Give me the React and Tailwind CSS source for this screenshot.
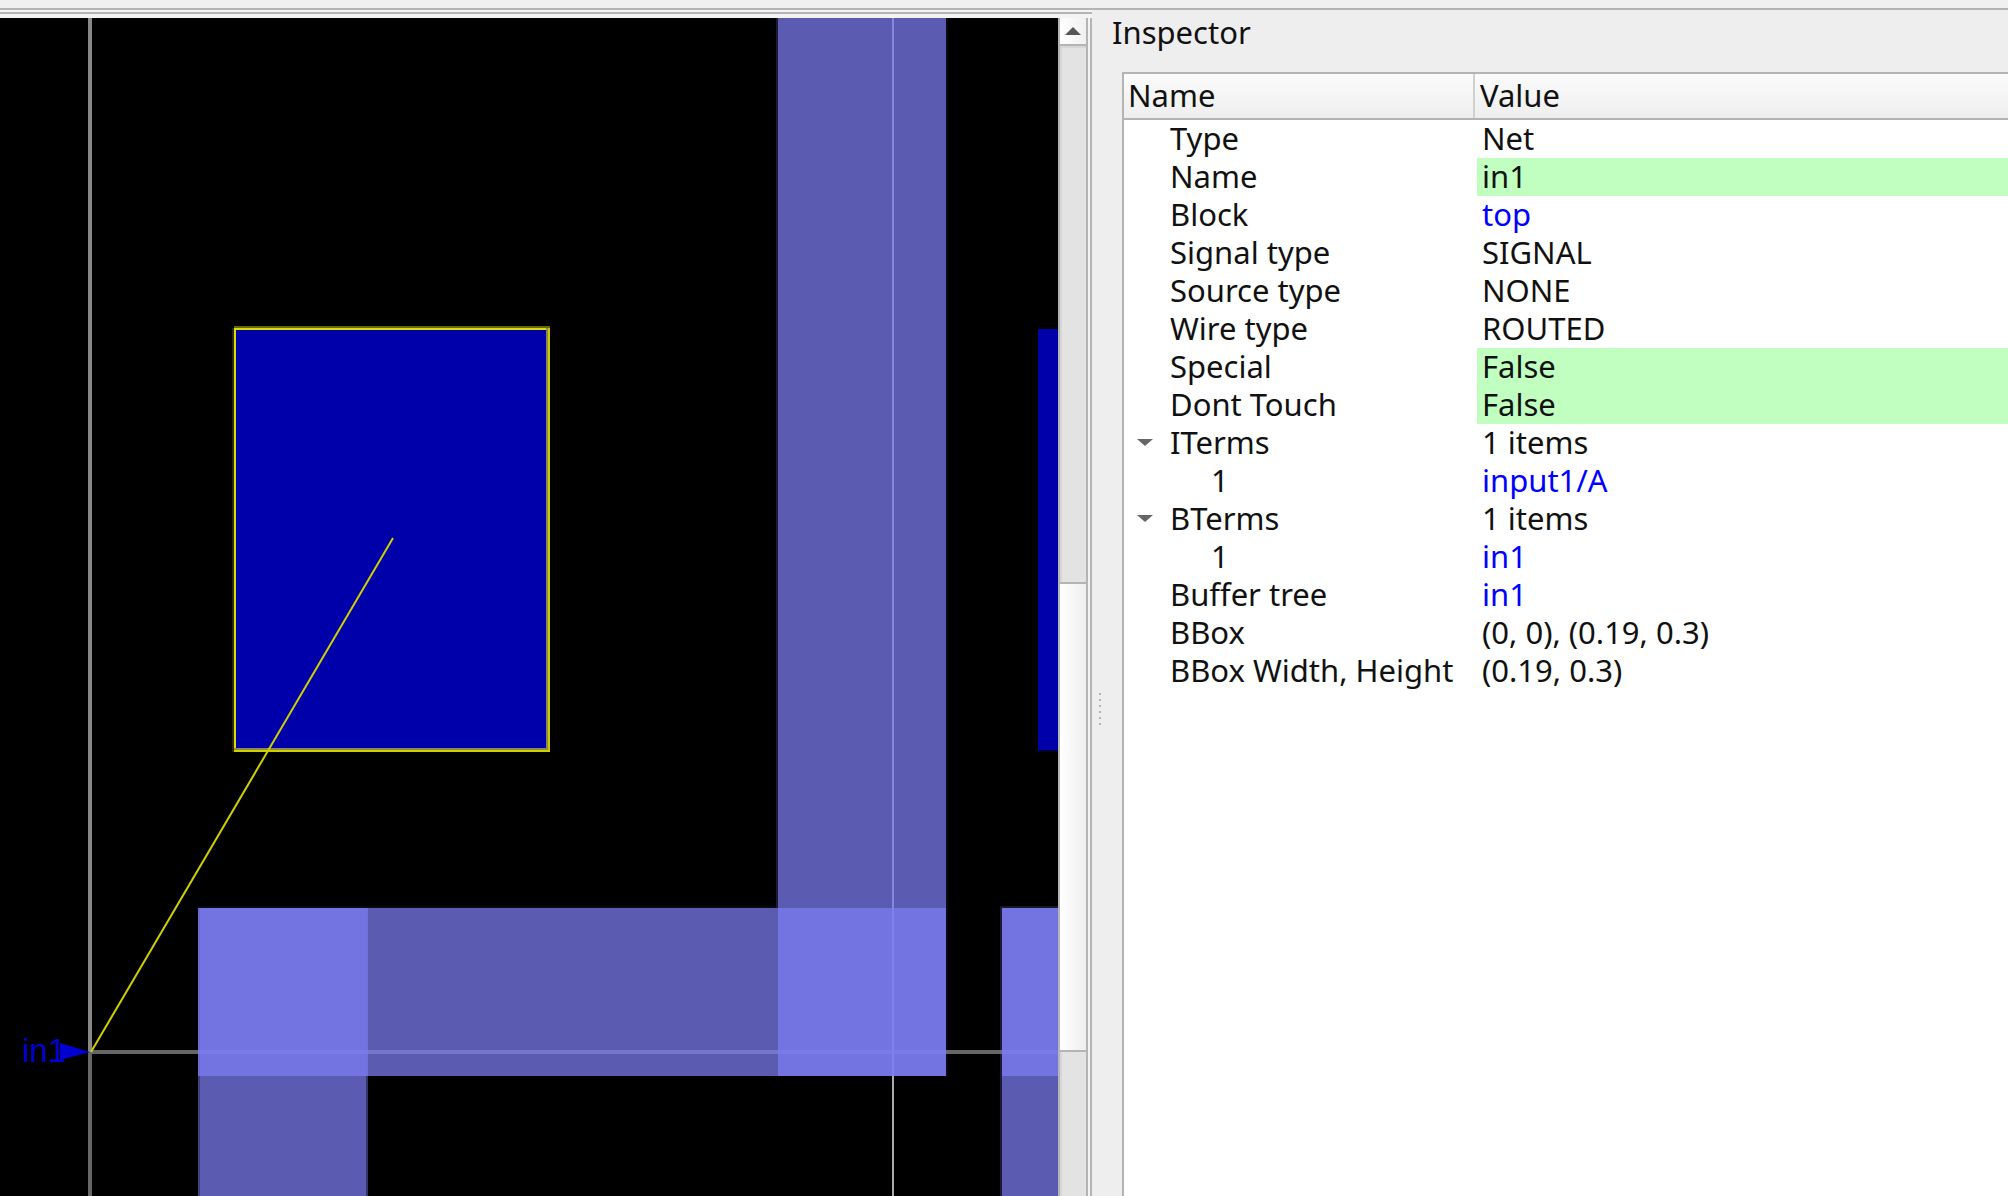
import React from 'react'

const rows = [
  { name: 'Type', value: 'Net' },
  { name: 'Name', value: 'in1', edit: true },
  { name: 'Block', value: 'top', link: true },
  { name: 'Signal type', value: 'SIGNAL' },
  { name: 'Source type', value: 'NONE' },
  { name: 'Wire type', value: 'ROUTED' },
  { name: 'Special', value: 'False', edit: true },
  { name: 'Dont Touch', value: 'False', edit: true },
  { name: 'ITerms', value: '1 items', open: true },
  { name: '1', value: 'input1/A', link: true, child: true },
  { name: 'BTerms', value: '1 items', open: true },
  { name: '1', value: 'in1', link: true, child: true },
  { name: 'Buffer tree', value: 'in1', link: true },
  { name: 'BBox', value: '(0, 0), (0.19, 0.3)' },
  { name: 'BBox Width, Height', value: '(0.19, 0.3)' },
]

const METAL = '#7c7cf3'
const METAL_ALPHA = 0.735

// each metal shape: [x, y, w, h]
const metalShapes = [
  [778, 18, 168, 1058],
  [200, 908, 166, 288],
  [1002, 908, 56, 288],
  [198, 908, 748, 168],
  [1002, 908, 56, 168],
]

// soft edges the scaled up screenshot has beside the metal
const metalFringes = [
  [776, 18, 2, 890, 0.3],
  [946, 18, 2, 1058, 0.12],
  [198, 908, 2, 288, 0.7],
  [366, 908, 2, 168, 0.95],
  [366, 1076, 2, 120, 0.6],
  [1000, 908, 2, 288, 0.3],
  [198, 906, 578, 2, 0.1],
  [1000, 906, 58, 2, 0.25],
]

const LayoutCanvas = () => (
  <svg width="1058" height="1178" viewBox="0 18 1058 1178" className="block shrink-0 bg-black">
    <g shapeRendering="crispEdges">
      {/* rulers sit under the metal */}
      <rect x="88" y="18" width="4" height="1034" fill="#888888" />
      <rect x="88" y="1052" width="4" height="144" fill="#666666" />
      <rect x="92" y="1050" width="966" height="4" fill="#666666" />
      <rect x="892" y="18" width="2" height="1178" fill="#aaaaaa" />

      {metalFringes.map(([x, y, w, h, a], i) => (
        <rect key={i} x={x} y={y} width={w} height={h} fill={METAL} fillOpacity={a * METAL_ALPHA} />
      ))}
      {metalShapes.map(([x, y, w, h], i) => (
        <rect key={i} x={x} y={y} width={w} height={h} fill={METAL} fillOpacity={METAL_ALPHA} />
      ))}

      {/* cell and its neighbour */}
      <rect x="1038" y="329" width="20" height="421" fill="#0000aa" />
      <rect x="1038" y="750" width="20" height="2" fill="#000030" />
      <rect x="232" y="328" width="2" height="424" fill="#2a2a00" />
      <rect x="234" y="326" width="316" height="2" fill="#666600" />
      <rect x="234" y="328" width="314" height="2" fill="#dcdc00" />
      <rect x="234" y="330" width="2" height="420" fill="#dcdc00" />
      <rect x="546" y="328" width="2" height="424" fill="#8a8a50" />
      <rect x="548" y="328" width="2" height="424" fill="#c8c800" />
      <rect x="234" y="748" width="314" height="2" fill="#8a8a50" />
      <rect x="234" y="750" width="316" height="2" fill="#d0d000" />
      <rect x="236" y="330" width="310" height="418" fill="#0000aa" />
    </g>
    <line x1="393" y1="538" x2="91" y2="1052" stroke="#d0d000" strokeWidth="2" />
    <path d="M60 1043 L90 1052 L60 1060 Z" fill="#0000d0" />
    <text x="22" y="1062" fontFamily="'Liberation Sans', sans-serif" fontSize="33" fill="#0000d0">in1</text>
  </svg>
)

const ScrollBar = () => (
  <div className="w-[30px] h-full flex flex-col shrink-0 bg-[#e3e3e3] border-x-2 border-[#b4b4b4]">
    <div className="h-[28px] shrink-0 bg-gradient-to-r from-white to-[#f0f0f0] flex items-center justify-center border-b-2 border-[#b4b4b4]">
      <div className="w-0 h-0 border-x-[8px] border-b-[8px] border-x-transparent border-b-[#555]" />
    </div>
    <div className="h-[536px] shrink-0 bg-[#e3e3e3] border-l-2 border-t-2 border-[#d6d6d6]" />
    <div className="h-[470px] shrink-0 bg-gradient-to-r from-white to-[#efefef] border-y-2 border-[#b4b4b4]" />
    <div className="flex-1 bg-[#e3e3e3] border-l-2 border-[#d6d6d6]" />
  </div>
)

const Row = ({ row }) => (
  <div className="flex h-[38px] leading-[36px]">
    <div className="w-[353px] shrink-0 relative">
      {row.open && (
        <div className="absolute left-[13px] top-[15px] w-0 h-0 border-x-[8px] border-t-[7px] border-x-transparent border-t-[#666]" />
      )}
      <span className={row.child ? 'pl-[87px]' : 'pl-[46px]'}>{row.name}</span>
    </div>
    <div className={`flex-1 pl-[5px] ${row.edit ? 'bg-[#c0ffc0]' : ''} ${row.link ? 'text-[#0000ff]' : ''}`}>
      {row.value}
    </div>
  </div>
)

export default function App() {
  return (
    <div className="w-[2008px] h-[1196px] overflow-hidden bg-[#eeeeee] text-[#111] text-[31px] font-['Noto_Sans',sans-serif] flex flex-col">
      <div className="h-[8px] bg-[#f0f0f0] shrink-0" />
      <div className="h-[2px] bg-[#b4b4b4] shrink-0" />
      <div className="flex-1 flex min-h-0">
        {/* left: layout view with its frame */}
        <div className="w-[1092px] shrink-0 flex flex-col">
          <div className="h-[2px] bg-[#f4f4f4]" />
          <div className="h-[2px] bg-[#b4b4b4]" />
          <div className="h-[4px] bg-[#f4f4f4]" />
          <div className="flex-1 flex min-h-0 border-r-2 border-[#b4b4b4]">
            <LayoutCanvas />
            <ScrollBar />
            <div className="w-[2px] bg-[#f4f4f4]" />
          </div>
        </div>

        {/* right: inspector dock */}
        <div className="flex-1 flex flex-col min-w-0">
          <div className="h-[62px] pl-[20px] leading-[30px] pt-[7px]">Inspector</div>
          <div className="flex-1 flex min-h-0 relative">
            <div className="absolute left-[7px] top-[621px] flex flex-col gap-[4px]">
              {[0, 1, 2, 3, 4, 5].map((i) => (
                <div key={i} className="w-[2px] h-[2px] bg-[#b4b4b4]" />
              ))}
            </div>
            <div className="ml-[30px] flex-1 bg-white border-l-2 border-t-2 border-[#b4b4b4] min-w-0">
              <div className="flex h-[46px] border-b-2 border-[#b4b4b4] bg-gradient-to-b from-[#fbfbfb] to-[#eeeeee] leading-[42px]">
                <div className="w-[351px] pl-[4px] border-r-2 border-[#d0d0d0]">Name</div>
                <div className="flex-1 pl-[5px]">Value</div>
              </div>
              {rows.map((row, i) => (
                <Row key={i} row={row} />
              ))}
            </div>
          </div>
        </div>
      </div>
    </div>
  )
}
